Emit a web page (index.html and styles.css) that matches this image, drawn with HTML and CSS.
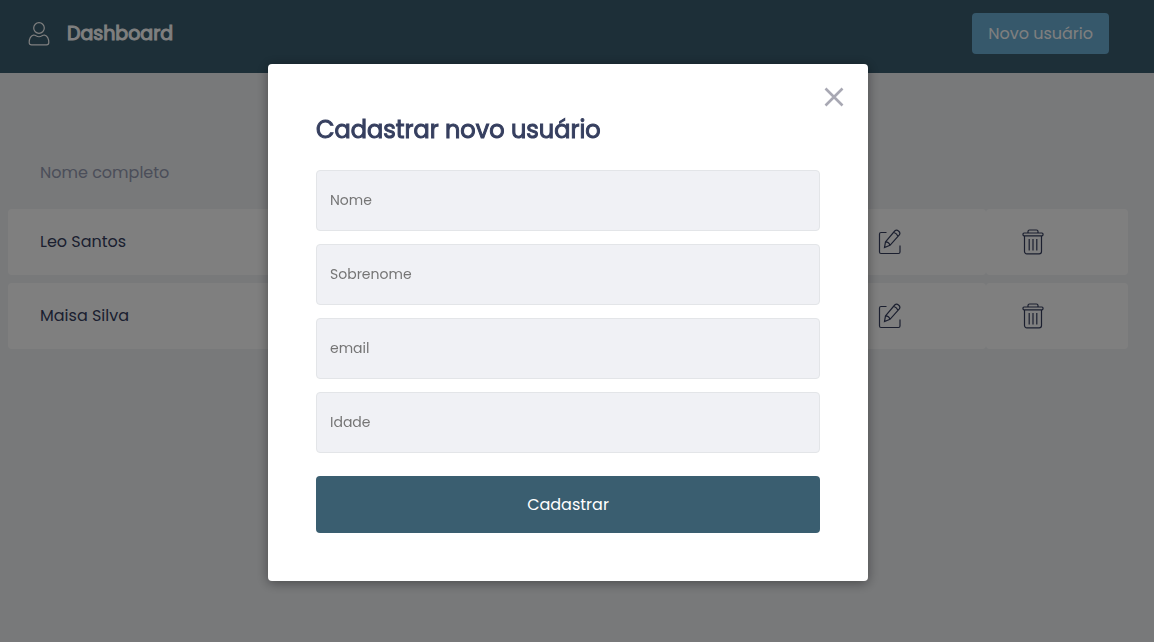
FILE: index.html
```html
<!DOCTYPE html>
<html lang="pt-BR">
<head>
  <meta charset="utf-8">
  <meta name="viewport" content="width=device-width, initial-scale=1">
  <title>Dashboard</title>
  <link rel="stylesheet" href="styles.css">
</head>
<body>
  <svg class="sprite" aria-hidden="true">
    <symbol id="icon-edit" viewBox="0 0 24 26">
      <path d="M8.500 3.500H3a1.500 1.500 0 0 0-1.500 1.500V23a1.500 1.500 0 0 0 1.500 1.500h17.500a1.500 1.500 0 0 0 1.500-1.500V16.500"/>
      <path d="M7.500 12.800L16.700 2Q18.500.3 20.500 2Q22.800 3.800 21.300 5.800L12 16.300L6.500 18.500ZM7.500 12.800Q11 13 12 16.300M15.700 3.200Q18.800 4.200 20 7.300"/>
    </symbol>
    <symbol id="icon-trash" viewBox="0 0 22 26">
      <rect x="1" y="4" width="20" height="2.800" rx="1"/>
      <path d="M6 4V2.500A1.500 1.500 0 0 1 7.500 1h7A1.500 1.500 0 0 1 16 2.500V4M2.500 7v15.500A2.300 2.300 0 0 0 4.800 24.800h12.400A2.300 2.300 0 0 0 19.500 22.500V7M7.200 10v11.500M11 10v11.500M14.800 10v11.500"/>
    </symbol>
  </svg>

  <header class="topbar">
    <div class="brand">
      <svg class="brand-icon" viewBox="0 0 22 24" aria-hidden="true">
        <circle cx="11" cy="6" r="5.300"/>
        <path d="M5.500 13Q7 13 8 13.800Q11 15.700 14 13.800Q15 13 16.500 13Q20.800 14.500 20.800 20.500Q20.800 22.800 18.500 22.800H3.500Q1.200 22.800 1.200 20.500Q1.200 14.500 5.500 13Z"/>
      </svg>
      <h1 class="brand-title">Dashboard</h1>
    </div>
    <button class="new-user" type="button">Novo usuário</button>
  </header>

  <main class="content">
    <table class="users">
      <thead>
        <tr><th scope="col">Nome completo</th><td class="action-col"></td><td class="action-col"></td></tr>
      </thead>
      <tbody>
        <tr>
          <td>Leo Santos</td>
          <td class="action-cell"><button class="icon-button" type="button" aria-label="Editar"><svg class="edit-icon"><use href="#icon-edit"/></svg></button></td>
          <td class="action-cell"><button class="icon-button" type="button" aria-label="Excluir"><svg class="trash-icon"><use href="#icon-trash"/></svg></button></td>
        </tr>
        <tr>
          <td>Maisa Silva</td>
          <td class="action-cell"><button class="icon-button" type="button" aria-label="Editar"><svg class="edit-icon"><use href="#icon-edit"/></svg></button></td>
          <td class="action-cell"><button class="icon-button" type="button" aria-label="Excluir"><svg class="trash-icon"><use href="#icon-trash"/></svg></button></td>
        </tr>
      </tbody>
    </table>
  </main>

  <div class="overlay">
    <section class="modal" role="dialog" aria-modal="true" aria-labelledby="modal-title">
      <button class="close" type="button" aria-label="Fechar">
        <svg class="close-icon" viewBox="0 0 20 20" aria-hidden="true"><path d="M1.500 1.500l17 17M18.500 1.500l-17 17"/></svg>
      </button>
      <form class="form">
        <h2 class="modal-title" id="modal-title">Cadastrar novo usuário</h2>
        <div class="fields">
          <input class="field" type="text" placeholder="Nome" aria-label="Nome">
          <input class="field" type="text" placeholder="Sobrenome" aria-label="Sobrenome">
          <input class="field" type="email" placeholder="email" aria-label="email">
          <input class="field" type="text" placeholder="Idade" aria-label="Idade">
        </div>
        <button class="submit" type="submit">Cadastrar</button>
      </form>
    </section>
  </div>
</body>
</html>
```

FILE: styles.css
```css
* {
  box-sizing: border-box;
  margin: 0;
  padding: 0;
}

body,
button,
input {
  font-family: Poppins, Inter, sans-serif;
  font-size: 16px;
}

body {
  background: #f0f2f5;
  color: #363f5f;
}

button {
  border: 0;
  cursor: pointer;
}

.sprite {
  position: absolute;
  width: 0;
  height: 0;
}

.topbar {
  display: flex;
  align-items: center;
  justify-content: space-between;
  padding: 13px 45px 19px 28px;
  background: #3a5e70;
}

.brand {
  display: flex;
  align-items: center;
  gap: 17px;
}

.brand-icon {
  width: 22px;
  height: 24px;
  fill: none;
  stroke: #fff;
  stroke-width: 1.2;
}

.brand-title {
  color: #fff;
  font-size: 19px;
  font-weight: 400;
  line-height: 30px;
  -webkit-text-stroke: 1px #fff;
}

.new-user {
  padding: 8px 16px;
  border-radius: 4px;
  background: #6cb0d6;
  color: #fff;
  line-height: 25px;
}

.content {
  padding: 64px 26px 0 8px;
}

.users {
  width: 100%;
  border-collapse: separate;
  border-spacing: 0 8px;
  table-layout: fixed;
}

.users th {
  padding: 16px 32px;
  color: #969cb3;
  font-weight: 400;
  line-height: 24px;
  text-align: left;
}

.action-col {
  width: 142px;
}

.users tbody td {
  height: 66px;
  padding: 0 32px 2px;
  border-radius: 4px;
  background: #fff;
  vertical-align: middle;
}

.users tbody .action-cell {
  padding: 0 34px;
}

.icon-button {
  display: block;
  background: none;
}

.edit-icon,
.trash-icon {
  display: block;
  width: 24px;
  height: 26px;
  fill: none;
  stroke: #363f5f;
  stroke-width: 1.2;
}

.trash-icon {
  width: 26px;
}

.overlay {
  position: fixed;
  inset: 0;
  display: flex;
  align-items: center;
  justify-content: center;
  padding: 3px 18px 0 0;
  background: rgba(0, 0, 0, 0.5);
}

.modal {
  position: relative;
  width: 100%;
  max-width: 600px;
  padding: 48px;
  border-radius: 4px;
  background: #fff;
  box-shadow: 0 2px 12px rgba(0, 0, 0, 0.4);
}

.close {
  position: absolute;
  top: 23px;
  right: 24px;
  background: none;
}

.close-icon {
  display: block;
  width: 20px;
  height: 20px;
  fill: none;
  stroke: #a8a8b3;
  stroke-width: 2.6;
}

.form {
  display: flex;
  flex-direction: column;
}

.modal-title {
  margin-bottom: 22px;
  font-size: 24px;
  font-weight: 400;
  line-height: 36px;
  -webkit-text-stroke: 1px #363f5f;
}

.fields {
  display: grid;
  gap: 13px;
}

.field {
  width: 100%;
  height: 61px;
  padding: 0 13px;
  border: 1px solid #e3e5e8;
  border-radius: 4px;
  background: #f0f1f5;
  color: #363f5f;
  font-size: 14px;
}

.field::placeholder {
  color: #757575;
}

.submit {
  height: 57px;
  margin-top: 23px;
  border-radius: 4px;
  background: #3a5e70;
  color: #fff;
}
```
